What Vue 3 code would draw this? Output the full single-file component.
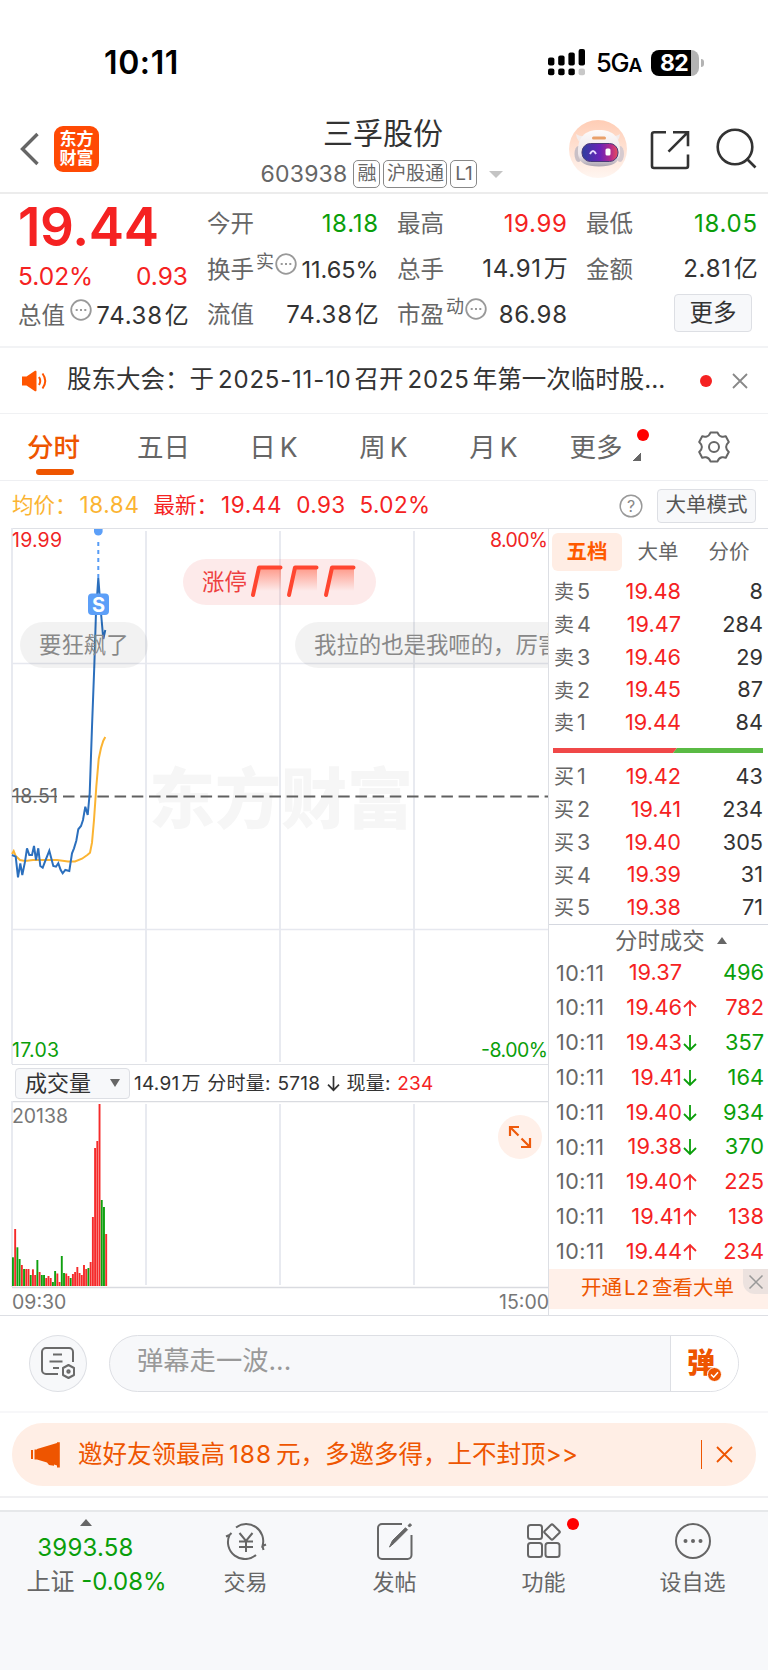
<template>
  <div class="page">
    <div class="status-bar">
      <span class="clock">10:11</span>
      <div class="status-right">
        <svg class="signal" width="38" height="27" viewBox="0 0 38 27">
          <rect x="0" y="8.500" width="6.400" height="8" rx="2" />
          <rect x="10.200" y="6.500" width="6.400" height="10" rx="2" />
          <rect x="20.400" y="3.500" width="6.400" height="13" rx="2" />
          <rect x="30.600" y="0" width="6.400" height="16.500" rx="2" />
          <rect x="0" y="19.500" width="6.400" height="6.700" rx="2" />
          <rect x="10.200" y="19.500" width="6.400" height="6.700" rx="2" />
          <rect x="20.400" y="19.500" width="6.400" height="6.700" rx="2" />
          <rect x="30.600" y="19.500" width="6.400" height="6.700" rx="2" fill="#c8c8c8" />
        </svg>
        <span class="network">5G<small>A</small></span>
        <div class="battery"><span>82</span></div>
        <i class="battery-cap"></i>
      </div>
    </div>

    <header class="header">
      <div class="header-left">
        <svg class="back" width="20" height="34" viewBox="0 0 20 34">
          <path d="M17.500 2L2.500 17l15 15" fill="none" stroke="#666" stroke-width="3.400" />
        </svg>
        <div class="logo"><span>东方</span><span>财富</span></div>
      </div>
      <div class="header-title">
        <h1>三孚股份</h1>
        <div class="sub">
          <span class="code">603938</span>
          <span class="tag">融</span>
          <span class="tag tag-wide">沪股通</span>
          <span class="tag">L1</span>
          <i class="caret"></i>
        </div>
      </div>
      <div class="header-right">
        <svg width="58" height="58" viewBox="0 0 58 58">
          <defs>
            <linearGradient id="halo" x1="0" y1="0" x2="0" y2="1">
              <stop offset="0" stop-color="#ffcdb5" />
              <stop offset="1" stop-color="#fff6f1" />
            </linearGradient>
            <linearGradient id="visor" x1="0" y1="0" x2="1" y2="0">
              <stop offset="0" stop-color="#2d3f9e" />
              <stop offset="0.5" stop-color="#6a22b8" />
              <stop offset="0.8" stop-color="#b52a8c" />
              <stop offset="1" stop-color="#e8505a" />
            </linearGradient>
            <linearGradient id="shell" x1="0" y1="0" x2="0" y2="1">
              <stop offset="0" stop-color="#fdfafa" />
              <stop offset="0.7" stop-color="#ece5e8" />
              <stop offset="1" stop-color="#a9a2ae" />
            </linearGradient>
          </defs>
          <circle cx="29" cy="29" r="29" fill="url(#halo)" />
          <path d="M7 14q1 9 8 9l5-7q-9 1-13-2zM51 14q-1 9-8 9l-5-7q9 1 13-2z" fill="#f4eceb" />
          <ellipse cx="9.500" cy="34" rx="4" ry="8" fill="#c9c0c6" />
          <ellipse cx="51" cy="34" rx="4" ry="8" fill="#d6cacf" />
          <path d="M9 34C8 17 16 10 30 10s22 7 21 24c-1 9-8 12.500-21 12.500S10 43 9 34z" fill="url(#shell)" />
          <rect x="13" y="23.500" width="36" height="18" rx="8.500" fill="url(#visor)" stroke="#4a3a78" stroke-width="1" />
          <rect x="23" y="16.500" width="14" height="3" rx="1.500" fill="#e9a06a" />
          <path d="M21 34q3-6 6 0" fill="none" stroke="#e9dcff" stroke-width="2" />
          <rect x="36.500" y="28.500" width="5" height="7" rx="1.500" fill="#fff" />
        </svg>
        <svg class="share" width="40" height="40" viewBox="0 0 40 40">
          <path d="M16 2.200H4a2 2 0 0 0-2 2V36a2 2 0 0 0 2 2h32a2 2 0 0 0 2-2V24.500M23 2.200h15v14M38 2.200L18.500 21.700" />
        </svg>
        <svg class="search" width="42" height="42" viewBox="0 0 42 42">
          <circle cx="19" cy="19" r="17.300" />
          <path d="M30.500 30.500L39.500 39.500" />
        </svg>
      </div>
    </header>

    <section class="quote">
      <div class="quote-main">
        <div class="price">19.44</div>
        <div class="change"><span>5.02%</span><span>0.93</span></div>
        <div class="cell">
          <span class="label">总值</span>
          <svg class="more-dot cap-dot" viewBox="0 0 22 22"><circle cx="11" cy="11" r="9.800" /><path d="M5.700 11h2M10 11h2M14.300 11h2" /></svg>
          <span class="value">74.38<b>亿</b></span>
        </div>
      </div>
      <div class="quote-grid">
        <div v-for="item in quotes" :key="item.label" class="cell">
          <span class="label">{{ item.label }}</span>
          <template v-if="item.mark">
            <span class="mark">{{ item.mark }}</span>
            <svg class="more-dot" viewBox="0 0 22 22"><circle cx="11" cy="11" r="9.800" /><path d="M5.700 11h2M10 11h2M14.300 11h2" /></svg>
          </template>
          <span class="value" :class="[item.color, { tight: item.mark === '实' }]">{{ item.value }}<b v-if="item.unit">{{ item.unit }}</b></span>
        </div>
        <div class="cell"><button class="more-btn">更多</button></div>
      </div>
    </section>

    <section class="notice">
      <svg width="26" height="22" viewBox="0 0 26 22">
        <path d="M0 6.500h4.500L13 .8a1 1 0 0 1 1.500.9v18.600a1 1 0 0 1-1.500.9L4.500 15.500H0z" fill="#ff5500" />
        <path d="M17 7q2.500 4 0 8M20.500 3.500q5.500 7.500 0 15" fill="none" stroke="#ff5500" stroke-width="2" />
      </svg>
      <p>股东大会：于<span class="n">2025-11-10</span>召开<span class="n">2025</span>年第一次临时股...</p>
      <i class="dot"></i>
      <svg width="16" height="16" viewBox="0 0 16 16"><path d="M1 1l14 14M15 1L1 15" stroke="#888" stroke-width="1.800" /></svg>
    </section>

    <nav class="tabs">
      <a v-for="(tab, i) in tabs" :key="tab" :class="{ active: i === 0 }">{{ tab[0] }}<span>{{ tab[1] }}</span></a>
      <a class="tab-more">更多<i class="corner"></i><i class="dot"></i></a>
      <a>
        <svg width="32" height="32" viewBox="0 0 32 32" fill="none" stroke="#666" stroke-width="2">
          <path d="M12.500 1.500h7q1.200 3.600 4.400 4.200 2.200.3 3.900-.5l3 5.800q-2.700 2.500-2.700 5t2.700 5l-3 5.800q-1.700-.8-3.900-.5-3.200.6-4.400 4.200h-7q-1.200-3.600-4.400-4.200-2.200-.3-3.900.5l-3-5.800q2.700-2.500 2.700-5t-2.700-5l3-5.800q1.700.8 3.900.5 3.200-.6 4.400-4.200z" stroke-linejoin="round" />
          <circle cx="16" cy="16" r="5" />
        </svg>
      </a>
    </nav>

    <section class="info">
      <span class="avg">均价：<em>18.84</em></span>
      <span class="latest">最新：<em>19.44</em></span>
      <span class="latest"><em>0.93</em></span>
      <span class="latest"><em>5.02%</em></span>
      <svg class="help" width="24" height="24" viewBox="0 0 24 24">
        <circle cx="12" cy="12" r="10.800" fill="none" stroke="#999" stroke-width="1.500" />
        <text x="12" y="17.500" text-anchor="middle" font-size="16" fill="#888">?</text>
      </svg>
      <button class="mode-btn">大单模式</button>
    </section>

    <main class="market">
      <div class="charts">
        <div class="price-chart">
          <svg width="549" height="537" viewBox="0 0 549 537">
            <text x="149" y="295" font-size="66" font-weight="900" fill="#f6f6f6">东方财富</text>
            <g fill="none" stroke="#e6e8ef">
              <path d="M12 0.500H549M12 536.500H549" stroke-width="1" stroke="#dfe1e6" />
              <path d="M12 135.500H549M12 401.500H549" stroke-width="1.300" />
              <path d="M12 0V536M146 3V534M280 3V534M414 3V534" stroke-width="1.800" />
            </g>
            <path d="M63 268.500H548" stroke="#606060" stroke-width="2" stroke-dasharray="11.500 5.700" />
            <path d="M12 268.500H57" stroke="#606060" stroke-width="1.600" />
            <path d="M98.300 14V54" stroke="#579cf5" stroke-width="2" stroke-dasharray="4 4" />
            <path d="M94 1h8.600v2.500a4.300 4 0 0 1-8.600 0z" fill="#5c9ff8" />
            <polyline :points="avgLine" fill="none" stroke="#fbb432" stroke-width="2" />
            <polyline :points="priceLine" fill="none" stroke="#2b6fbd" stroke-width="2" />
            <g font-size="19.500">
              <text x="12" y="19" fill="#f02424" textLength="50">19.99</text>
              <text x="548" y="19" fill="#f02424" text-anchor="end" textLength="58">8.00%</text>
              <text x="12" y="275" fill="#666" textLength="46">18.51</text>
              <text x="12" y="529" fill="#0a9e0a" textLength="47">17.03</text>
              <text x="548" y="529" fill="#0a9e0a" text-anchor="end" textLength="67">-8.00%</text>
            </g>
            <rect x="88" y="65.500" width="21" height="21.500" rx="4" fill="#5c9ff8" />
            <text x="98.500" y="83.500" text-anchor="middle" font-size="20" font-weight="700" fill="#fff">S</text>
          </svg>
          <div class="bullet bullet-hot">
            <span>涨停</span>
            <svg v-for="n in 3" :key="n" width="36.500" height="34" viewBox="0 0 36.500 34">
              <defs>
                <linearGradient id="flag" x1="0" y1="0" x2="0" y2="1">
                  <stop offset="0" stop-color="#ff6a50" stop-opacity="0.65" />
                  <stop offset="1" stop-color="#ff6a50" stop-opacity="0" />
                </linearGradient>
              </defs>
              <path d="M10 3h22v24H6z" fill="url(#flag)" />
              <path d="M4 31L10 3.500H31.500" fill="none" stroke="#ff4630" stroke-width="4" stroke-linecap="round" stroke-linejoin="round" />
            </svg>
          </div>
          <div class="bullet bullet-left">要狂飙了</div>
          <div class="bullet bullet-right">我拉的也是我咂的，厉害</div>
        </div>

        <div class="volume-head">
          <button class="volume-btn">成交量<i></i></button>
          <p>14.91<b>万</b> 分时量: 5718 <svg width="13" height="17" viewBox="0 0 13 17"><path d="M6.500 1v14M1 9.700l5.500 5.500 5.500-5.500" fill="none" stroke="#333" stroke-width="1.700" /></svg> 现量: <em>234</em></p>
        </div>

        <div class="volume-chart">
          <svg width="549" height="188" viewBox="0 0 549 188">
            <g fill="none" stroke="#e6e8ef">
              <path d="M12 0.500H549M12 186.500H549" stroke-width="1.500" stroke="#d9dbe0" />
              <path d="M12 0V186M146 3V184M280 3V184M414 3V184" stroke-width="1.800" />
            </g>
            <rect
              v-for="(bar, i) in volumes"
              :key="i"
              :x="12 + i * 2.22"
              :y="185 - bar[0]"
              width="1.9"
              :height="bar[0]"
              :fill="bar[1] ? '#f52a2a' : '#0fa00f'"
            />
            <text x="12" y="22" font-size="19.500" fill="#777" textLength="56">20138</text>
          </svg>
          <div class="expand">
            <svg width="24" height="24" viewBox="0 0 24 24" fill="none" stroke="#ee5a0c" stroke-width="2.200">
              <path d="M2 11V2h9M2 2l8.500 8.500M22 13v9h-9M22 22l-8.500-8.500" />
            </svg>
          </div>
        </div>
        <div class="times"><span>09:30</span><span>15:00</span></div>
      </div>

      <aside class="book">
        <div class="book-tabs"><span class="on">五档</span><span>大单</span><span>分价</span></div>
        <div v-for="row in sells" :key="row[0]" class="book-row">
          <span class="side">卖<em>{{ row[0] }}</em></span><span class="red">{{ row[1] }}</span><span>{{ row[2] }}</span>
        </div>
        <svg class="ratio" width="210" height="5" viewBox="0 0 210 5">
          <path d="M0 0H124L120 5H0z" fill="#f04848" />
          <path d="M124 0H210V5H120z" fill="#5aba44" />
        </svg>
        <div v-for="row in buys" :key="row[0]" class="book-row">
          <span class="side">买<em>{{ row[0] }}</em></span><span class="red">{{ row[1] }}</span><span>{{ row[2] }}</span>
        </div>
        <div class="trade-title">分时成交<i></i></div>
        <div v-for="(t, i) in trades" :key="i" class="trade-row">
          <span>10:11</span>
          <span class="red">{{ t[0] }}</span>
          <svg width="14" height="18" viewBox="0 0 14 18" fill="none" stroke-width="1.800">
            <path v-if="t[1] === 'up'" d="M7 17V2M1 8l6-6 6 6" stroke="#f52a2a" />
            <path v-if="t[1] === 'down'" d="M7 1v15M1 10l6 6 6-6" stroke="#0a9e0a" />
          </svg>
          <span :class="t[3]">{{ t[2] }}</span>
        </div>
        <div class="promo">
          <span>开通<em>L2</em>查看大单</span>
          <i class="promo-close"><svg width="16" height="16" viewBox="0 0 16 16"><path d="M1.500 1.500l13 13M14.500 1.500l-13 13" stroke="#999" stroke-width="1.500" /></svg></i>
        </div>
      </aside>
    </main>

    <section class="comment">
      <button class="round-btn">
        <svg width="36" height="34" viewBox="0 0 36 34" fill="none" stroke="#6a6a6a" stroke-width="2">
          <path d="M18 28H6a4 4 0 0 1-4-4V6a4 4 0 0 1 4-4h23a4 4 0 0 1 4 4v10M13 8.500h9M9.500 15.500h13M13 22h6" />
          <path d="M28.500 19l5.500 3v7l-5.500 3-5.500-3v-7z" stroke-linejoin="round" />
          <circle cx="28.500" cy="25.500" r="1.200" />
        </svg>
      </button>
      <div class="comment-box">
        <span class="placeholder">弹幕走一波...</span>
        <div class="barrage">
          <b>弹</b>
          <svg width="15" height="15" viewBox="0 0 15 15">
            <circle cx="7.500" cy="7.500" r="7" fill="#ee5500" stroke="#fff" stroke-width="1" />
            <path d="M4 7.500l2.700 2.700L11 5.300" fill="none" stroke="#fff" stroke-width="1.600" />
          </svg>
        </div>
      </div>
    </section>

    <section class="invite-wrap">
      <div class="invite">
        <svg width="30" height="26" viewBox="0 0 30 26" fill="#ee5500">
          <path d="M0 8h2v9H0zM3.500 7.500H6v10H3.500zM6 7L26 1V.3h2.800v25.200H26v-2l-3-1v1.200l-5-.6-2-2.600-5-1.500L6 17.500z" />
        </svg>
        <p>邀好友领最高<em>188</em>元，多邀多得，上不封顶&gt;&gt;</p>
        <i class="sep"></i>
        <svg width="17" height="17" viewBox="0 0 17 17"><path d="M1 1l15 15M16 1L1 16" stroke="#ee5500" stroke-width="1.800" /></svg>
      </div>
    </section>

    <footer class="bottom">
      <div class="index">
        <i></i>
        <span class="green">3993.58</span>
        <p>上证 <span class="green">-0.08%</span></p>
      </div>
      <div class="item">
        <svg width="42" height="38" viewBox="0 0 42 38">
          <path d="M11 5.500A17 17 0 0 1 37.500 24l3.500-1.500M37.500 24l1 4M31 33A17 17 0 0 1 4.500 13L1 14.500M4.500 13l2-2" />
          <path d="M14.500 11l6.500 8 6.500-8M21 19v11M14 19.500h14M14 25h14" />
        </svg>
        <span>交易</span>
      </div>
      <div class="item">
        <svg width="36" height="38" viewBox="0 0 36 38">
          <path d="M25 2H5a4 4 0 0 0-4 4v27a4 4 0 0 0 4 4h25.500a4 4 0 0 0 4-4V13" />
          <path d="M12.500 25l3-6.500L28.500 5.800l2 2-13 13zM31 3.600l2-2 1.500 1.500-2 2z" fill="#666" stroke-width="1" />
        </svg>
        <span>发帖</span>
      </div>
      <div class="item">
        <svg width="34" height="38" viewBox="0 0 34 38">
          <rect x="1" y="3" width="14" height="14" rx="2.500" />
          <rect x="1" y="21" width="14" height="14" rx="2.500" />
          <rect x="18.500" y="21" width="14" height="14" rx="2.500" />
          <path d="M23.800 3l-6.300 6.300a1 1 0 0 0 0 1.400l6.300 6.300a1.700 1.700 0 0 0 2.400 0l6.300-6.300a1 1 0 0 0 0-1.400L26.200 3a1.700 1.700 0 0 0-2.400 0z" />
        </svg>
        <span>功能</span>
        <i class="dot"></i>
      </div>
      <div class="item">
        <svg width="38" height="38" viewBox="0 0 38 38">
          <circle cx="19" cy="19" r="17" />
          <g fill="#666" stroke="none"><circle cx="11.500" cy="19" r="2" /><circle cx="19" cy="19" r="2" /><circle cx="26.500" cy="19" r="2" /></g>
        </svg>
        <span>设自选</span>
      </div>
    </footer>
  </div>
</template>

<script setup>
import { ref } from 'vue';

const quotes = ref([
  { label: '今开', value: '18.18', color: 'green' },
  { label: '最高', value: '19.99', color: 'red' },
  { label: '最低', value: '18.05', color: 'green' },
  { label: '换手', mark: '实', value: '11.65%' },
  { label: '总手', value: '14.91', unit: '万' },
  { label: '金额', value: '2.81', unit: '亿' },
  { label: '流值', value: '74.38', unit: '亿' },
  { label: '市盈', mark: '动', value: '86.98' },
]);

const tabs = ['分时', '五日', '日K', '周K', '月K'];

const sells = [
  [5, '19.48', 8],
  [4, '19.47', 284],
  [3, '19.46', 29],
  [2, '19.45', 87],
  [1, '19.44', 84],
];
const buys = [
  [1, '19.42', 43],
  [2, '19.41', 234],
  [3, '19.40', 305],
  [4, '19.39', 31],
  [5, '19.38', 71],
];

const trades = [
  ['19.37', '', 496, 'green'],
  ['19.46', 'up', 782, 'red'],
  ['19.43', 'down', 357, 'green'],
  ['19.41', 'down', 164, 'green'],
  ['19.40', 'down', 934, 'green'],
  ['19.38', 'down', 370, 'green'],
  ['19.40', 'up', 225, 'red'],
  ['19.41', 'up', 138, 'red'],
  ['19.44', 'up', 234, 'red'],
];

const priceLine =
  '12,327 15.7,328.7 18,349.3 20.3,335.3 22.3,347 25,333.7 27,320.3 29.3,327 32,327 34,318 36,332 38.3,320.3 40.3,338 42.7,339.7 45,333.7 49.3,322.7 53.3,338 56,338.7 58.3,335.3 60.7,342 62.7,345.3 65.3,342 69.3,343 72,325.3 74,320.3 76.3,312.7 78.3,301.3 81,298 83,292 85.3,278.7 87.7,287 89.7,265.3 92,199 94.3,138 96,84 98.3,50 101,85 103.3,111 105.3,102';
const avgLine =
  '12,326 13.7,323 15.7,328 20,332 25,333 33,332 43,332 57,332 68,333.5 75,333.5 82,330.700 87.3,327 90,324.700 92,314.700 94,292 96.3,258.700 98.7,231 101,220 103.3,212.700 105.3,209';

// [height, rising]
const volumes = [
  [28.7, 0], [57, 1], [38.7, 0], [27, 0], [21, 1], [17, 0], [17, 1], [17, 1], [11, 0], [16.7, 1], [11, 1],
  [26, 0], [14, 1], [11, 0], [11, 0], [8, 1], [10, 1], [8, 1], [4, 0], [15, 0], [12.5, 1], [4, 1],
  [30, 0], [13, 0], [12.5, 1], [10, 1], [8, 0], [12, 1], [14, 1], [19, 1], [13, 1], [11, 1], [21, 1],
  [17, 1], [18, 0], [24, 1], [69, 1], [138, 1], [145, 1], [182, 1], [86, 0], [79, 0], [52, 1],
];
</script>

<style>
body {
  margin: 0;
  background: #fff;
}
</style>

<style scoped>
.page {
  width: 768px;
  height: 1670px;
  overflow: hidden;
  display: flex;
  flex-direction: column;
  background: #fff;
  color: #333;
  font-family: Inter, "Noto Sans CJK SC", sans-serif;
  line-height: 1;
}

.page * {
  box-sizing: border-box;
}

.page > * {
  flex: none;
}

p,
h1 {
  margin: 0;
  font-weight: 400;
}

em,
i {
  font-style: normal;
}

button {
  font-family: inherit;
  line-height: 1;
  padding: 0;
  color: #333;
  background: #f7f8fa;
  border: 1.5px solid #dddfe4;
  border-radius: 4px;
}

svg {
  flex: none;
  display: block;
}

.red {
  color: #f52222 !important;
}

.green {
  color: #0a9e0a !important;
}

.dot {
  width: 12px;
  height: 12px;
  border-radius: 50%;
  background: #f00;
}

.status-bar {
  height: 110px;
  padding: 15px 64px 0 104px;
  display: flex;
  align-items: center;
  justify-content: space-between;
  color: #000;
}

.clock {
  font-size: 32px;
  font-weight: 600;
  letter-spacing: 0.6px;
}

.status-right {
  display: flex;
  align-items: center;
}

.network {
  width: 44px;
  margin: 1px 11px 0 10px;
  font-size: 25.5px;
  font-weight: 500;
  letter-spacing: -1.2px;
  white-space: nowrap;
}

.network small {
  font-size: 19px;
  font-weight: 600;
}

.battery {
  width: 48px;
  height: 26px;
  border-radius: 8px;
  background: linear-gradient(90deg, #000 40px, #b3b3b3 40px);
  color: #fff;
  font-size: 23px;
  font-weight: 700;
  line-height: 27px;
  padding-left: 9px;
  letter-spacing: -0.8px;
}

.battery-cap {
  width: 3px;
  height: 8px;
  margin-left: 2px;
  border-radius: 0 3px 3px 0;
  background: #b3b3b3;
}

.header {
  height: 84px;
  display: grid;
  grid-template-columns: 240px 1fr 240px;
  border-bottom: 2px solid #ececec;
}

.header-left {
  display: flex;
  align-items: center;
  padding: 0 0 4px 20px;
}

.logo {
  width: 45px;
  height: 46px;
  margin-left: 14px;
  border-radius: 9px;
  background: #ff4a04;
  color: #fff;
  display: flex;
  flex-direction: column;
  align-items: center;
  justify-content: center;
  gap: 2px;
  font-size: 17px;
  font-weight: 700;
}

.header-title {
  display: flex;
  flex-direction: column;
  align-items: center;
  padding: 7px 2px 0 0;
}

.header-title h1 {
  font-size: 30px;
  line-height: 32px;
}

.sub {
  display: flex;
  align-items: center;
  height: 28px;
  margin: 11px 2px 0 0;
}

.code {
  font-size: 23px;
  color: #666;
  letter-spacing: 0.2px;
  margin-right: 6px;
}

.tag {
  height: 28px;
  width: 27px;
  margin-right: 3px;
  border: 1.5px solid #888;
  border-radius: 5px;
  font-size: 19px;
  line-height: 25px;
  text-align: center;
  color: #666;
}

.tag-wide {
  width: 64px;
}

.caret {
  margin-left: 9px;
  border: 7px solid transparent;
  border-top-color: #c4c4c4;
  border-bottom: 0;
}

.header-right {
  display: flex;
  align-items: center;
  padding: 0 0 4px 41px;
}

.share,
.search {
  fill: none;
  stroke: #333;
  stroke-width: 2.6;
}

.share {
  margin: 2px 26px 0 23px;
}

.quote {
  height: 152px;
  display: flex;
  padding: 5px 11px 0 18px;
}

.quote-main {
  width: 170px;
  margin-right: 19px;
}

.price {
  height: 56px;
  line-height: 56px;
  font-size: 53px;
  font-weight: 600;
  color: #f52222;
  letter-spacing: -0.3px;
}

.change {
  height: 43px;
  display: flex;
  align-items: center;
  justify-content: space-between;
  font-size: 24.5px;
  color: #f52222;
}

.quote-main .cell {
  height: 35px;
}

.quote-grid {
  padding-top: 2px;
  display: grid;
  grid-template-columns: 171px 170px 171px;
  grid-template-rows: repeat(3, 45.5px);
  column-gap: 19px;
}

.cell {
  display: flex;
  align-items: center;
}

.label {
  font-size: 23.5px;
  color: #666;
  white-space: nowrap;
}

.mark {
  font-size: 18px;
  color: #666;
  margin: -15px 0 0 2px;
}

.more-dot {
  width: 22px;
  height: 22px;
  margin: -11px 0 0 1px;
  fill: none;
  stroke: #999;
  stroke-width: 1.8;
}

.cap-dot {
  margin-left: 5px;
}

.value {
  margin-left: auto;
  margin-right: -0.7px;
  font-size: 24px;
  letter-spacing: 0.7px;
  color: #333;
  white-space: nowrap;
}

.value.tight {
  font-size: 23.5px;
  letter-spacing: 0;
}

.value b {
  font-weight: 400;
  margin-left: 2px;
  letter-spacing: 0;
}

.more-btn {
  width: 78px;
  height: 38px;
  margin: -4px 5px 0 auto;
  font-size: 23.5px;
}

.notice {
  height: 68px;
  display: flex;
  align-items: center;
  padding: 0 20px 0 22px;
  border-top: 2px solid #f2f3f5;
  border-bottom: 1px solid #f0f1f3;
}

.notice p {
  width: 599px;
  margin: -2px 35px 0 19px;
  font-size: 24.5px;
  white-space: nowrap;
}

.notice .n {
  margin: 0 3px 0 4px;
  font-size: 24px;
  letter-spacing: 0.8px;
}

.notice .dot {
  background: #f52222;
  margin-right: 20px;
}

.tabs {
  height: 67px;
  display: grid;
  grid-template-columns: repeat(7, 110px);
  border-bottom: 1px solid #eeeff2;
}

.tabs a {
  position: relative;
  display: flex;
  align-items: center;
  justify-content: center;
  padding-right: 3px;
  font-size: 26.5px;
  color: #666;
}

.tabs a:nth-child(n+3) span {
  margin-left: 4px;
}

.tabs .tab-more {
  padding-right: 0;
}

.tabs .active {
  color: #ee5500;
  font-weight: 500;
}

.tabs .active::after {
  content: "";
  position: absolute;
  left: 36px;
  bottom: 5px;
  width: 38px;
  height: 6px;
  border-radius: 3px;
  background: #ee5500;
}

.corner {
  width: 8px;
  height: 8px;
  margin: 20px 0 0 10px;
  background: linear-gradient(135deg, transparent 50%, #666 50%);
}

.tabs .dot {
  position: absolute;
  left: 87px;
  top: 15px;
}

.info {
  height: 47px;
  display: flex;
  align-items: center;
  gap: 14px;
  padding: 2px 12px 0;
  font-size: 21.5px;
}

.info em {
  font-size: 22.5px;
  letter-spacing: 0.4px;
}

.avg em,
.latest:nth-child(2) em {
  margin-left: 3px;
  letter-spacing: 0.6px;
}

.avg {
  color: #fbb432;
}

.latest {
  color: #f52222;
}

.help {
  margin-left: auto;
}

.mode-btn {
  width: 99px;
  height: 34px;
  font-size: 20.5px;
  color: #555;
}

.market {
  height: 788px;
  display: flex;
  border-bottom: 1px solid #dddfe4;
}

.charts {
  width: 549px;
  border-right: 1px solid #dddfe4;
}

.price-chart,
.volume-chart {
  position: relative;
  overflow: hidden;
}

.bullet {
  position: absolute;
  top: 94px;
  height: 46px;
  border-radius: 23px;
  background: rgba(0, 0, 0, 0.05);
  color: #888;
  font-size: 22.4px;
  line-height: 46px;
  padding: 0 19px;
  white-space: nowrap;
}

.bullet-left {
  left: 20px;
  width: 128px;
}

.bullet-right {
  left: 295px;
}

.bullet-hot {
  left: 183px;
  top: 31px;
  width: 193px;
  display: flex;
  align-items: center;
  background: rgba(240, 50, 50, 0.1);
  color: #ee4040;
}

.bullet-hot svg {
  margin-top: -2px;
}

.bullet-hot span {
  margin-right: 2px;
}

.volume-head {
  height: 36px;
  display: flex;
  align-items: center;
  padding-left: 15px;
}

.volume-btn {
  width: 115px;
  height: 31px;
  display: flex;
  align-items: center;
  padding-left: 9px;
  font-size: 22px;
}

.volume-btn i {
  margin-left: 19px;
  border: 5px solid transparent;
  border-top: 8px solid #666;
  border-bottom: 0;
}

.volume-head p {
  margin-left: 4px;
  font-size: 19px;
  letter-spacing: 0.25px;
  word-spacing: 1px;
  white-space: pre;
}

.volume-head p svg {
  display: inline-block;
  vertical-align: -2px;
}

.volume-head b {
  font-weight: 400;
  margin-left: 2px;
}

.volume-head em {
  color: #f52222;
}

.expand {
  position: absolute;
  right: 6px;
  top: 14px;
  width: 44px;
  height: 44px;
  border-radius: 50%;
  background: #fff0e9;
  display: flex;
  align-items: center;
  justify-content: center;
}

.times {
  height: 27px;
  display: flex;
  align-items: center;
  justify-content: space-between;
  padding: 1px 0 0 12px;
  font-size: 19.5px;
  color: #777;
}

.times span {
  margin-right: -1px;
}

.book {
  width: 219px;
  border-top: 1px solid #dddfe4;
}

.book-tabs {
  height: 46.5px;
  padding-top: 4px;
  display: flex;
  align-items: flex-start;
  font-size: 20.5px;
  line-height: 38px;
  color: #666;
}

.book-tabs span {
  width: 70px;
  margin-left: 3px;
  text-align: center;
}

.book-tabs span + span {
  margin-left: 1px;
}

.book-tabs .on {
  border-radius: 6px;
  background: #ffede4;
  color: #ff5a00;
  font-weight: 700;
}

.book-row {
  height: 32.8px;
  display: grid;
  grid-template-columns: 60px 67px 1fr;
  align-items: center;
  padding: 0 5px;
  font-size: 21.7px;
  text-align: right;
}

.book-row .side {
  color: #666;
  font-size: 20px;
  text-align: left;
}

.side em {
  margin-left: 3px;
  font-size: 21.5px;
}

.ratio {
  margin: 9px 0 7px 4px;
}

.trade-title {
  height: 31.5px;
  display: flex;
  align-items: center;
  padding-left: 66px;
  border-top: 1.5px solid #d5d8e0;
  font-size: 22.4px;
  color: #666;
}

.trade-title i {
  margin-left: 12px;
  border: 5px solid transparent;
  border-bottom: 7px solid #666;
  border-top: 0;
}

.trade-row {
  height: 34.8px;
  display: grid;
  grid-template-columns: 60px 65px 14px 1fr;
  column-gap: 1px;
  align-items: center;
  padding: 0 4px 0 7px;
  font-size: 21.8px;
  text-align: right;
}

.trade-row span:first-child {
  text-align: left;
  color: #666;
  font-size: 21.5px;
  letter-spacing: 0.5px;
}

.promo {
  position: relative;
  height: 40px;
  line-height: 38px;
  padding-left: 32px;
  background: #fff0e9;
  color: #ee5500;
  font-size: 20.5px;
}

.promo em {
  margin: 0 2px;
  letter-spacing: 1px;
}

.promo-close {
  position: absolute;
  right: 0;
  top: 0;
  width: 25px;
  height: 25px;
  border-radius: 0 0 0 12px;
  background: #ece2df;
  display: flex;
  align-items: center;
  justify-content: center;
}

.comment {
  height: 97px;
  display: flex;
  align-items: center;
  padding: 0 29px 1px;
  border-bottom: 2px solid #f7f7f9;
}

.round-btn {
  width: 58px;
  height: 57px;
  border-radius: 50%;
  display: flex;
  align-items: center;
  justify-content: center;
}

.comment-box {
  width: 630px;
  height: 57px;
  margin-left: 22px;
  display: flex;
  align-items: center;
  justify-content: space-between;
  border: 1.5px solid #dddfe4;
  border-radius: 29px;
  background: #f7f8fa;
  overflow: hidden;
}

.placeholder {
  margin: -4px 0 0 27px;
  font-size: 26.3px;
  color: #999;
}

.barrage {
  width: 68px;
  height: 57px;
  border-left: 1.5px solid #dddfe4;
  background: #fff;
  display: flex;
  align-items: center;
  color: #ee5500;
}

.barrage b {
  margin: -1px 0 0 16px;
  font-size: 28px;
  font-weight: 900;
}

.barrage svg {
  margin: 22px 0 0 -8px;
}

.invite-wrap {
  height: 85px;
  padding: 10px 12px 0;
  border-bottom: 2px solid #f0f0f2;
}

.invite {
  height: 63px;
  display: flex;
  align-items: center;
  padding: 0 23px 0 19px;
  border-radius: 31px;
  background: #ffeee5;
  color: #ee5500;
}

.invite p {
  margin-left: 17px;
  font-size: 24.5px;
  white-space: nowrap;
}

.invite em {
  margin: 0 4px;
  letter-spacing: 0.9px;
}

.sep {
  width: 1.5px;
  height: 29px;
  margin: 0 14px 0 auto;
  background: #ee5500;
}

.bottom {
  height: 160px;
  margin-top: 12px;
  display: flex;
  border-top: 2px solid #e6e8ea;
  background: #f7f8fa;
}

.index {
  width: 171px;
  display: flex;
  flex-direction: column;
  align-items: center;
  padding-top: 7px;
  font-size: 24px;
  color: #666;
}

.index i {
  border: 6.5px solid transparent;
  border-bottom: 7px solid #666;
  border-top: 0;
}

.index > span {
  margin: 10px 0;
  letter-spacing: 0.2px;
}

.index p {
  margin-left: 22px;
  white-space: nowrap;
}

.item {
  position: relative;
  width: 149px;
  display: flex;
  flex-direction: column;
  align-items: center;
  padding-top: 10px;
  font-size: 22px;
  color: #666;
}

.item svg {
  fill: none;
  stroke: #666;
  stroke-width: 2;
  margin-bottom: 11px;
}

.item .dot {
  position: absolute;
  left: 98px;
  top: 6px;
}
</style>
